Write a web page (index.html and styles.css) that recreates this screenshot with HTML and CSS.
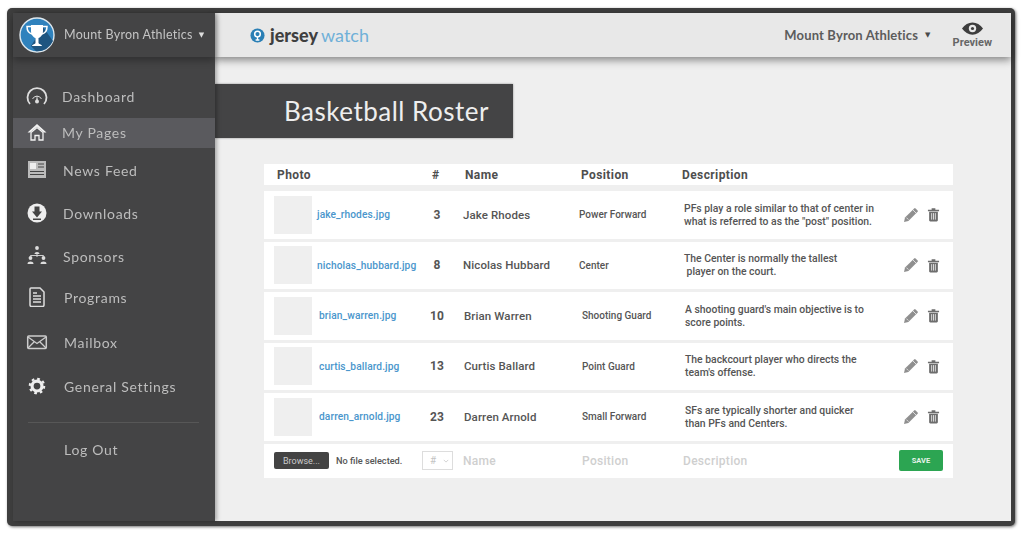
FILE: index.html
```html
<!DOCTYPE html>
<html lang="en">
<head>
<meta charset="utf-8">
<title>Basketball Roster</title>
<link rel="stylesheet" href="styles.css">
</head>
<body>
<svg class="defs" aria-hidden="true">
  <symbol id="pencil" viewBox="0 0 16 16"><path d="M1 15l1-4.400L11.200 1.400a1 1 0 0 1 1.400 0l2 2a1 1 0 0 1 0 1.400L5.400 14z" fill="#8f8f8f"/><path d="M3.400 10.600l2 2M10 3l3 3" stroke="#fff" stroke-width=".7" fill="none"/></symbol>
  <symbol id="trash" viewBox="0 0 14 16"><path d="M1 3h12v1.400H1zM5 1.200h4V3H5z" fill="#6d6d6d"/><path d="M2.300 5h9.400v9.300a1.200 1.200 0 0 1-1.200 1.200h-7a1.200 1.200 0 0 1-1.200-1.200z" fill="#6d6d6d"/><path d="M5 6.500v7M7 6.500v7M9 6.500v7" stroke="#fff" stroke-width=".8"/></symbol>
</svg>
<div class="frame">
  <aside class="sidebar">
    <header class="org">
      <svg class="avatar" viewBox="0 0 36 36">
        <circle cx="18" cy="18" r="17" fill="#2f82bd" stroke="#dfe8ee" stroke-width="1.400"/>
        <path d="M24 10l10 14a17 17 0 0 1-17 10.300L12 29z" fill="#1e5580"/>
        <path d="M12 8h12v6c0 4-2.500 6.500-4.500 7v5c0 1 3.500 1.500 3.500 3H13c0-1.500 3.500-2 3.500-3v-5c-2-.5-4.500-3-4.500-7z" fill="#fff"/>
        <path d="M12 9.500H8c0 4 1.500 6.500 5 7.500M24 9.500h4c0 4-1.500 6.500-5 7.500" fill="none" stroke="#fff" stroke-width="1.500"/>
      </svg>
      <span class="org-name">Mount Byron Athletics</span>
      <span class="caret">▼</span>
    </header>
    <nav class="nav">
      <a class="item">
        <svg class="ico" viewBox="0 0 22 18"><path d="M4 17A9.500 9.500 0 1 1 18 17" fill="none" stroke="#ddd" stroke-width="1.800"/><path d="M6.500 12a5 5 0 0 1 9 0" fill="none" stroke="#ddd" stroke-width="1"/><path d="M10 14l1-6 1 6z" fill="#ddd"/><circle cx="11" cy="14.500" r="2" fill="#ddd"/></svg>
        <span>Dashboard</span>
      </a>
      <a class="item active g6">
        <svg class="ico" viewBox="0 0 22 18"><path d="M11 1L1.500 9.500h2.600L11 3.800l6.900 5.700h2.600z" fill="#f2f2f2"/><path d="M5 9.500L11 4.500l6 5V17h-4v-4.500H9V17H5z" fill="#5a5a5e" stroke="#f2f2f2" stroke-width="1.300"/></svg>
        <span>My Pages</span>
      </a>
      <a class="item g8 x1">
        <svg class="ico" viewBox="0 0 22 18"><rect x="2" y="0" width="18" height="17" fill="#bbb"/><rect x="4" y="2" width="6" height="6" fill="#eee"/><path d="M12 3h6M12 6h6M4 10.500h14M4 13.500h14" stroke="#444" stroke-width="1"/></svg>
        <span>News Feed</span>
      </a>
      <a class="item g13 x1">
        <svg class="ico big" viewBox="0 0 20 20"><circle cx="10" cy="10" r="9.500" fill="#eee"/><path d="M7.500 3.500h5v5H15l-5 6-5-6h2.500zM6 15.500h8v1.500H6z" fill="#444"/></svg>
        <span>Downloads</span>
      </a>
      <a class="item g13 x1">
        <svg class="ico tall" viewBox="0 0 22 20"><g fill="#ddd"><circle cx="11" cy="2" r="1.900"/><path d="M8.500 8c0-2.800 5-2.800 5 0z"/><circle cx="4.500" cy="12" r="1.900"/><path d="M1.500 18c0-3.200 6-3.200 6 0z"/><circle cx="17.500" cy="12" r="1.900"/><path d="M14.500 18c0-3.200 6-3.200 6 0z"/></g><path d="M11 8v3M4.500 10V9.500h13v.5" fill="none" stroke="#ddd" stroke-width=".9"/></svg>
        <span>Sponsors</span>
      </a>
      <a class="item g11 x2">
        <svg class="ico tall" viewBox="0 0 22 20"><path d="M5 1h9l4 4v13a1.500 1.500 0 0 1-1.500 1.500h-11A1.500 1.500 0 0 1 4 18V2a1 1 0 0 1 1-1z" fill="none" stroke="#ddd" stroke-width="1.500"/><path d="M7 6h4M7 9h8M7 12h8M7 15h8" stroke="#ddd" stroke-width="1.300"/></svg>
        <span>Programs</span>
      </a>
      <a class="item g15 x2">
        <svg class="ico" viewBox="0 0 22 18"><rect x="1.700" y="3" width="18.600" height="12.500" rx="1" fill="none" stroke="#ccc" stroke-width="1.500"/><path d="M2 4l9 6.500L20 4M2 15l6.500-6.500M20 15l-6.500-6.500" fill="none" stroke="#ccc" stroke-width="1.300"/></svg>
        <span>Mailbox</span>
      </a>
      <a class="item g14 x2">
        <svg class="ico" viewBox="0 0 20 20"><circle cx="10" cy="10" r="5.500" fill="none" stroke="#eee" stroke-width="3.500"/><circle cx="10" cy="10" r="8" fill="none" stroke="#eee" stroke-width="2.400" stroke-dasharray="3 3.280"/></svg>
        <span>General Settings</span>
      </a>
    </nav>
    <div class="divider"></div>
    <a class="logout">Log Out</a>
  </aside>
  <main class="main">
    <header class="topbar">
      <div class="logo">
        <svg class="logo-mark" viewBox="0 0 16 16"><circle cx="8" cy="8" r="7.500" fill="#2a7fb5"/><circle cx="8" cy="6.500" r="3" fill="none" stroke="#fff" stroke-width="1.600"/><path d="M6 12h4v1.500H6zM7.300 9h1.400v3H7.300z" fill="#fff"/></svg>
        <span class="logo-a">jersey</span><span class="logo-b">watch</span>
      </div>
      <div class="account"><span>Mount Byron Athletics</span><span class="caret dark">▼</span></div>
      <div class="preview">
        <svg class="eye" viewBox="0 0 24 14"><path d="M0 7c3-4.500 7.500-7 12-7s9 2.500 12 7c-3 4.500-7.500 7-12 7S3 11.500 0 7z" fill="#3d3d3d"/><circle cx="12" cy="7" r="4.200" fill="#e8e8e8"/><circle cx="12" cy="7" r="1.800" fill="#3d3d3d"/></svg>
        <span>Preview</span>
      </div>
    </header>
    <h1 class="banner">Basketball Roster</h1>
    <section class="roster">
      <div class="head line">
        <span>Photo</span><span class="num-h">#</span><span class="name-h">Name</span><span class="pos-h">Position</span><span class="desc-h">Description</span>
      </div>
      <div class="row line">
        <div class="photo"><span class="thumb"></span><a class="file">jake_rhodes.jpg</a></div>
        <span class="num">3</span><span class="name">Jake Rhodes</span><span class="pos">Power Forward</span>
        <p class="desc">PFs play a role similar to that of center in<br>what is referred to as the "post" position.</p>
        <div class="tools"><svg class="pen"><use href="#pencil"/></svg><svg class="bin"><use href="#trash"/></svg></div>
      </div>
      <div class="row line">
        <div class="photo"><span class="thumb"></span><a class="file">nicholas_hubbard.jpg</a></div>
        <span class="num">8</span><span class="name">Nicolas Hubbard</span><span class="pos">Center</span>
        <p class="desc">The Center is normally the tallest<br>&nbsp;player on the court.</p>
        <div class="tools"><svg class="pen"><use href="#pencil"/></svg><svg class="bin"><use href="#trash"/></svg></div>
      </div>
      <div class="row line shift">
        <div class="photo"><span class="thumb"></span><a class="file">brian_warren.jpg</a></div>
        <span class="num">10</span><span class="name">Brian Warren</span><span class="pos">Shooting Guard</span>
        <p class="desc">A shooting guard's main objective is to<br>score points.</p>
        <div class="tools"><svg class="pen"><use href="#pencil"/></svg><svg class="bin"><use href="#trash"/></svg></div>
      </div>
      <div class="row line shift">
        <div class="photo"><span class="thumb"></span><a class="file">curtis_ballard.jpg</a></div>
        <span class="num">13</span><span class="name">Curtis Ballard</span><span class="pos">Point Guard</span>
        <p class="desc">The backcourt player who directs the<br>team's offense.</p>
        <div class="tools"><svg class="pen"><use href="#pencil"/></svg><svg class="bin"><use href="#trash"/></svg></div>
      </div>
      <div class="row line shift">
        <div class="photo"><span class="thumb"></span><a class="file">darren_arnold.jpg</a></div>
        <span class="num">23</span><span class="name">Darren Arnold</span><span class="pos">Small Forward</span>
        <p class="desc">SFs are typically shorter and quicker<br>than PFs and Centers.</p>
        <div class="tools"><svg class="pen"><use href="#pencil"/></svg><svg class="bin"><use href="#trash"/></svg></div>
      </div>
      <div class="add line">
        <div class="photo"><span class="browse">Browse...</span><span class="nofile">No file selected.</span></div>
        <span class="select"><span>#</span><svg class="chev" viewBox="0 0 8 5"><path d="M1 1l3 3 3-3" fill="none" stroke="#c4c4c4"/></svg></span>
        <span class="ph">Name</span><span class="ph">Position</span><span class="ph">Description</span>
        <span class="save">SAVE</span>
      </div>
    </section>
  </main>
</div>
</body>
</html>
```
FILE: styles.css
```css
* { box-sizing: border-box; }
html, body { margin: 0; height: 100%; background: #fff; overflow: hidden; }
.defs { display: none; }
.frame {
  display: flex;
  width: 1008px;
  height: 518px;
  margin: 8px 0 0 7px;
  padding: 5px 4px 5px 6px;
  background: #3e3e3e;
  border-radius: 5px;
  box-shadow: 1px 1px 3px rgba(0,0,0,.55);
  filter: blur(.5px);
  font-family: "Roboto", "Liberation Sans", sans-serif;
}
.sidebar {
  width: 202px;
  flex: none;
  background: #444445;
  color: #c8c8c8;
  font-family: "Lato", "Liberation Sans", sans-serif;
  box-shadow: 2px 0 4px rgba(0,0,0,.3);
  z-index: 2;
}
.org {
  display: flex;
  align-items: center;
  height: 44px;
  padding-left: 6px;
  box-shadow: 0 4px 7px rgba(0,0,0,.28);
}
.avatar { width: 36px; height: 36px; flex: none; }
.org-name { margin: -2px 0 0 9px; font-size: 12.500px; letter-spacing: .25px; color: #c4c4c4; }
.caret { margin: -1px 0 0 6px; font-family: "DejaVu Sans", sans-serif; font-size: 7px; color: #ddd; }
.caret.dark { color: #4a4a4a; margin: 0 0 0 7px; }
.nav { display: flex; flex-direction: column; margin-top: 25px; }
.item {
  display: flex;
  align-items: center;
  height: 30px;
  padding: 0 0 2px 13px;
  font-size: 14px;
  letter-spacing: .7px;
  color: #bdbdbd;
}
.item span { margin-left: 14px; }
.item.active { background: #5a5a5e; }
.x1 span { margin-left: 15px; }
.x2 span { margin-left: 16px; }
.g6 { margin-top: 6px; }
.g8 { margin-top: 8px; }
.g11 { margin-top: 11px; }
.g13 { margin-top: 13px; }
.g14 { margin-top: 14px; }
.g15 { margin-top: 15px; }
.ico { width: 22px; height: 18px; flex: none; }
.ico.big { height: 20px; }
.ico.tall { height: 20px; }
.divider { height: 1px; margin: 20px 16px 0 15px; background: #575757; }
.logout {
  display: block;
  margin: 18px 0 0 51px;
  font-size: 14px;
  letter-spacing: .7px;
  color: #bdbdbd;
}
.main { flex: 1; min-width: 0; background: #efefef; }
.topbar {
  display: flex;
  align-items: center;
  height: 44px;
  padding: 0 19px 0 35px;
  background: #e8e8e8;
  box-shadow: 0 3px 8px rgba(0,0,0,.45);
}
.logo { display: flex; align-items: center; font-family: "Lato", "Liberation Sans", sans-serif; font-size: 18px; }
.logo-mark { width: 15px; height: 15px; margin-right: 5px; }
.logo-a { font-weight: 900; color: #3f3f3f; }
.logo-b { margin-left: 3px; color: #6fb0d8; font-weight: 400; }
.account {
  display: flex;
  align-items: center;
  margin-left: auto;
  font-family: "Lato", "Liberation Sans", sans-serif;
  font-size: 13px;
  font-weight: 700;
  letter-spacing: .15px;
  color: #5c5c5c;
}
.preview {
  display: flex;
  flex-direction: column;
  align-items: center;
  margin-left: 22px;
  font-size: 11px;
  font-weight: 700;
  color: #666;
}
.eye { width: 21px; height: 13px; margin-bottom: 1px; }
.banner {
  display: flex;
  align-items: center;
  width: 298px;
  height: 54px;
  margin: 27px 0 0;
  padding-left: 69px;
  background: #444445;
  font-family: "Lato", "Liberation Sans", sans-serif;
  font-size: 26px;
  font-weight: 400;
  letter-spacing: .5px;
  color: #eee;
  box-shadow: 0 0 2px rgba(0,0,0,.4);
}
.roster { width: 689px; margin: 26px 0 0 49px; color: #555; }
.line {
  display: grid;
  align-items: center;
  background: #fff;
}
.head { height: 21px; padding-left: 13px; font-size: 12px; font-weight: 700; letter-spacing: .4px; grid-template-columns: 155px 33px 116px 101px 1fr; margin-bottom: 6px; color: #4e4e4e; }
.row { height: 47.500px; margin-bottom: 3px; padding-left: 10px; grid-template-columns: 143px 46px 116px 105px 1fr 58px; }
.row.shift .file { margin-left: 7px; }
.row.shift .name { margin-left: 1px; }
.row.shift .pos { margin-left: 3px; }
.row.shift .desc { margin-left: 1px; }
.photo { display: flex; align-items: center; }
.thumb { width: 38px; height: 38px; flex: none; background: #efefef; }
.file { margin-left: 5px; font-size: 10.200px; font-weight: 500; letter-spacing: .1px; color: #4a96cc; white-space: nowrap; }
.num { font-size: 12px; font-weight: 700; text-align: center; color: #555; padding-right: 6px; white-space: nowrap; }
.name { font-size: 11.500px; font-weight: 500; letter-spacing: .1px; white-space: nowrap; }
.pos { font-size: 10px; font-weight: 500; white-space: nowrap; }
.desc { margin: 0; font-size: 10.400px; line-height: 13px; font-weight: 500; white-space: nowrap; }
.tools { display: flex; align-items: center; gap: 8px; justify-content: flex-end; padding-right: 13px; }
.pen { width: 16px; height: 16px; }
.bin { width: 13px; height: 15px; }
.add {
  height: 34px;
  padding: 0 10px;
  grid-template-columns: 148px 41px 119px 101px 1fr 44px;
  font-size: 12px;
}
.browse {
  width: 55px; height: 17px; flex: none;
  display: flex; align-items: center; justify-content: center;
  background: #434343;
  border-radius: 2px;
  color: #ccc;
  font-size: 9px;
}
.nofile { margin-left: 7px; font-size: 9.200px; font-weight: 500; color: #555; white-space: nowrap; }
.select {
  display: flex; align-items: center; justify-content: space-between;
  width: 31px; height: 19px;
  padding: 0 3px 0 7px;
  border: 1px solid #ddd;
  color: #c4c4c4;
  font-size: 10px;
}
.chev { width: 6px; height: 4px; }
.ph { color: #cfcfcf; font-weight: 500; letter-spacing: .3px; white-space: nowrap; }
.save {
  width: 44px; height: 21px;
  display: flex; align-items: center; justify-content: center;
  background: #2ca552;
  border-radius: 2px;
  color: #e6f3ea;
  font-size: 7.500px;
  font-weight: 700;
}
```
